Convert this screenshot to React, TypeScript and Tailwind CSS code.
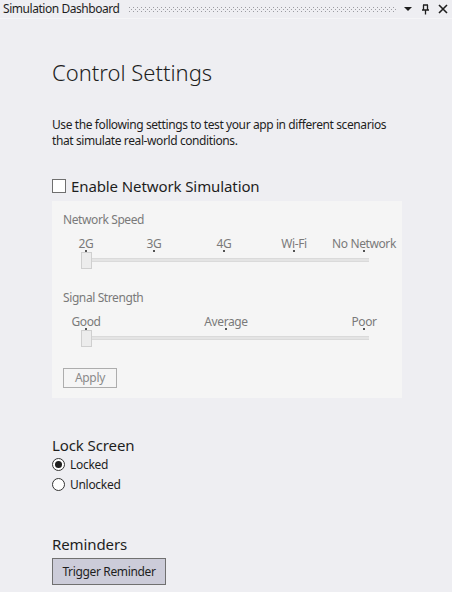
import React from "react";

const font = { fontFamily: '"Noto Sans", "Open Sans", sans-serif' };

function Slider({ labels, positions }: { labels: string[]; positions: number[] }) {
  return (
    <div className="relative h-[36px] w-[340px]">
      {labels.map((l, i) => (
        <span
          key={l}
          className="absolute top-0 -translate-x-1/2 text-[12px] leading-[16px] tracking-[-0.4px] text-[#7a7a7a] whitespace-nowrap"
          style={{ left: positions[i] }}
        >
          {l}
        </span>
      ))}
      {positions.map((p) => (
        <span key={p} className="absolute top-[14px] block h-[2px] w-[2px] bg-[#555]" style={{ left: p - 1 }}></span>
      ))}
      <div className="absolute left-[23px] top-[22px] h-[4px] w-[283px] bg-[#e4e4e4] border-y border-[#dadada]"></div>
      <div className="absolute left-[18px] top-[16px] h-[17px] w-[11px] bg-[#ececec] border border-[#cfcfcf]"></div>
    </div>
  );
}

export default function App() {
  return (
    <div className="w-[452px] h-[592px] bg-[#eeeef2] overflow-hidden text-[#1e1e1e]" style={font}>
      <div className="flex items-center h-[19px] border-b border-[#f5f5f7]">
        <span className="pl-[3px] text-[12px] tracking-[-0.45px] text-[#1e1e1e] whitespace-nowrap leading-none">Simulation Dashboard</span>
        <svg className="ml-[9px] flex-1" height="5" shapeRendering="crispEdges">
          <defs>
            <pattern id="grip" width="4" height="4" patternUnits="userSpaceOnUse">
              <rect x="0" y="0" width="1" height="1" fill="#9c9ca2" />
              <rect x="2" y="2" width="1" height="1" fill="#9c9ca2" />
            </pattern>
          </defs>
          <rect width="100%" height="5" fill="url(#grip)" />
        </svg>
        <div className="flex items-center gap-[8px] pl-[8px] pr-[4px]">
          <svg width="9" height="6" viewBox="0 0 9 6"><path d="M0 1 L8 1 L4 5 Z" fill="#1e1e1e" /></svg>
          <svg width="9" height="11" viewBox="0 0 9 11">
            <path d="M2 1 H7 M2.5 1 V6 M6.5 1 V6 M1 6 H8 M4.5 6 V10.5" stroke="#1e1e1e" strokeWidth="1.3" fill="none" />
          </svg>
          <svg width="10" height="10" viewBox="0 0 10 10">
            <path d="M1 1 L9 9 M9 1 L1 9" stroke="#1e1e1e" strokeWidth="1.6" />
          </svg>
        </div>
      </div>

      <div className="pl-[52px]">
        <h1 className="mt-[38px] text-[22px] font-light leading-[30px] text-[#1e1e1e]">Control Settings</h1>
        <p className="mt-[30px] text-[12px] leading-[16px] tracking-[-0.4px] w-[350px]">
          Use the following settings to test your app in different scenarios that simulate real-world conditions.
        </p>
        <label className="mt-[27px] flex items-center gap-[5px]">
          <span className="block h-[14px] w-[14px] border border-[#6f6f6f] bg-white"></span>
          <span className="text-[15px] leading-[20px] tracking-[-0.1px]">Enable Network Simulation</span>
        </label>

        <div className="mt-[5px] w-[350px] h-[197px] bg-[#f5f5f5] pl-[11px] pt-[11px]">
          <div className="text-[12px] leading-[16px] tracking-[-0.4px] text-[#7a7a7a]">Network Speed</div>
          <div className="mt-[8px]">
            <Slider labels={["2G", "3G", "4G", "Wi-Fi", "No Network"]} positions={[23, 91, 161, 231, 301]} />
          </div>
          <div className="mt-[18px] text-[12px] leading-[16px] tracking-[-0.4px] text-[#7a7a7a]">Signal Strength</div>
          <div className="mt-[8px]">
            <Slider labels={["Good", "Average", "Poor"]} positions={[23, 163, 301]} />
          </div>
          <button className="mt-[18px] flex h-[20px] w-[54px] items-center justify-center border border-[#adadad] bg-[#f5f5f5] text-[12px] tracking-[-0.3px] leading-none text-[#8a8a8a]">
            Apply
          </button>
        </div>

        <div className="mt-[37px] text-[15px] leading-[20px] tracking-[-0.1px]">Lock Screen</div>
        <div className="mt-[1px] flex flex-col gap-[3px]">
          <label className="flex items-center gap-[5px] h-[17px]">
            <span className="flex h-[13px] w-[13px] items-center justify-center rounded-full border border-[#333] bg-white">
              <span className="block h-[7px] w-[7px] rounded-full bg-[#1e1e1e]"></span>
            </span>
            <span className="text-[12px] tracking-[-0.3px]">Locked</span>
          </label>
          <label className="flex items-center gap-[5px] h-[17px]">
            <span className="block h-[13px] w-[13px] rounded-full border border-[#333] bg-white"></span>
            <span className="text-[12px] tracking-[-0.3px]">Unlocked</span>
          </label>
        </div>

        <div className="mt-[41px] text-[15px] leading-[20px] tracking-[-0.1px]">Reminders</div>
        <button className="mt-[4px] flex h-[27px] w-[114px] items-center justify-center border border-[#707070] bg-[#ccccd9] text-[12px] tracking-[-0.35px] text-[#1e1e1e]">
          Trigger Reminder
        </button>
      </div>
    </div>
  );
}
